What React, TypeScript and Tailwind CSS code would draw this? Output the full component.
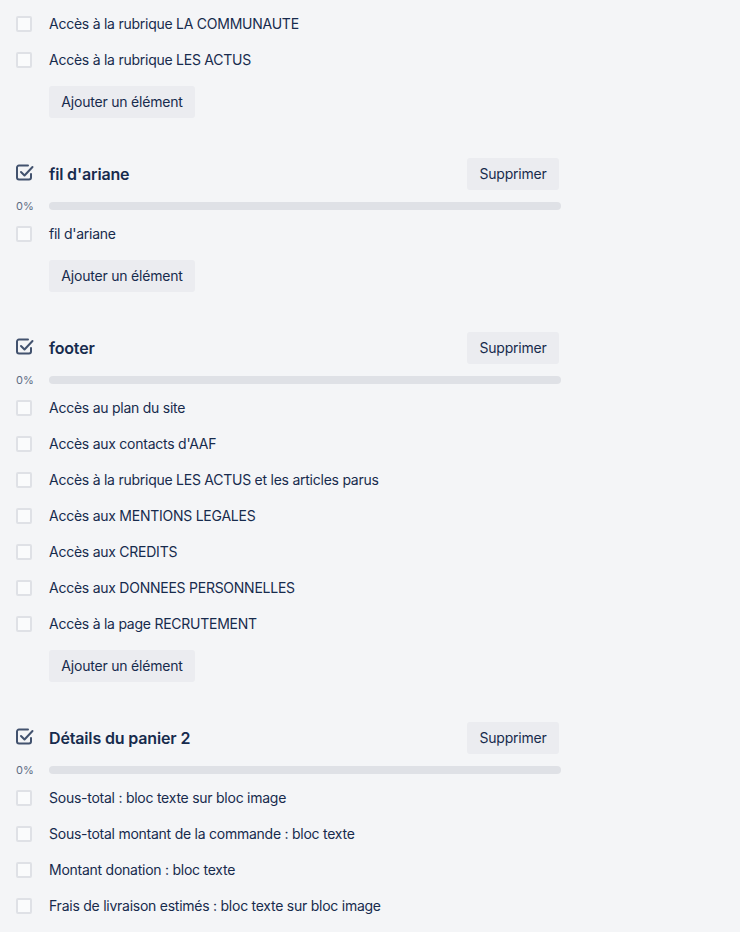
import React from 'react';

type Checklist = {
  title?: string;
  items: string[];
};

const lists: Checklist[] = [
  { items: ['Accès à la rubrique LA COMMUNAUTE', 'Accès à la rubrique LES ACTUS'] },
  { title: "fil d'ariane", items: ["fil d'ariane"] },
  {
    title: 'footer',
    items: [
      'Accès au plan du site',
      "Accès aux contacts d'AAF",
      'Accès à la rubrique LES ACTUS et les articles parus',
      'Accès aux MENTIONS LEGALES',
      'Accès aux CREDITS',
      'Accès aux DONNEES PERSONNELLES',
      'Accès à la page RECRUTEMENT',
    ],
  },
  {
    title: 'Détails du panier 2',
    items: [
      'Sous-total : bloc texte sur bloc image',
      'Sous-total montant de la commande : bloc texte',
      'Montant donation : bloc texte',
      'Frais de livraison estimés : bloc texte sur bloc image',
    ],
  },
];

const ChecklistIcon = () => (
  <svg width="18" height="18" viewBox="0 0 18 18" fill="none" className="text-[#42526e]">
    <path
      d="M15 10v3.5a2 2 0 0 1-2 2H3a2 2 0 0 1-2-2v-10a2 2 0 0 1 2-2h9"
      stroke="currentColor"
      strokeWidth="2"
      strokeLinecap="round"
    />
    <path d="M5 8l3.5 3.5L16.5 3" stroke="currentColor" strokeWidth="2" strokeLinecap="round" strokeLinejoin="round" />
  </svg>
);

const Item = ({ label }: { label: string }) => (
  <div className="flex h-9 items-center">
    <div className="w-[33px] shrink-0">
      <div className="h-4 w-4 rounded-[2px] border-2 border-[#dfe1e6] bg-[#fafbfc]" />
    </div>
    <span className="text-sm tracking-[-0.25px] text-[#172b4d]">{label}</span>
  </div>
);

const ChecklistBlock = ({ list, showAdd }: { list: Checklist; showAdd: boolean }) => (
  <div>
    {list.title && (
      <>
        <div className="flex h-8 items-center">
          <div className="w-[33px] shrink-0 -mt-[2px]">
            <ChecklistIcon />
          </div>
          <h3 className="flex-1 text-base font-semibold tracking-[-0.15px] text-[#172b4d]">{list.title}</h3>
          <button className="mr-[2px] h-8 w-[92px] rounded-[3px] bg-[#ebecf0] text-sm tracking-[-0.2px] text-[#172b4d]">
            Supprimer
          </button>
        </div>
        <div className="mt-[6px] flex h-5 items-center">
          <span className="w-[33px] shrink-0 text-[11px] text-[#5e6c84]">0%</span>
          <div className="h-2 flex-1 rounded-full bg-[#dfe1e6]" />
        </div>
      </>
    )}
    {list.items.map(item => (
      <Item key={item} label={item} />
    ))}
    {showAdd && (
      <div className="mt-2 pl-[33px]">
        <button className="h-8 w-[146px] rounded-[3px] bg-[#ebecf0] text-sm tracking-[-0.2px] text-[#172b4d]">
          Ajouter un élément
        </button>
      </div>
    )}
  </div>
);

export default function App() {
  return (
    <div
      className="h-[932px] w-[740px] overflow-hidden bg-[#f4f5f7] pl-4 pt-[6px]"
      style={{ fontFamily: 'Inter, "Noto Sans", sans-serif' }}
    >
      <div className="flex w-[545px] flex-col gap-10">
        {lists.map((list, i) => (
          <ChecklistBlock key={i} list={list} showAdd={i < lists.length - 1} />
        ))}
      </div>
    </div>
  );
}
